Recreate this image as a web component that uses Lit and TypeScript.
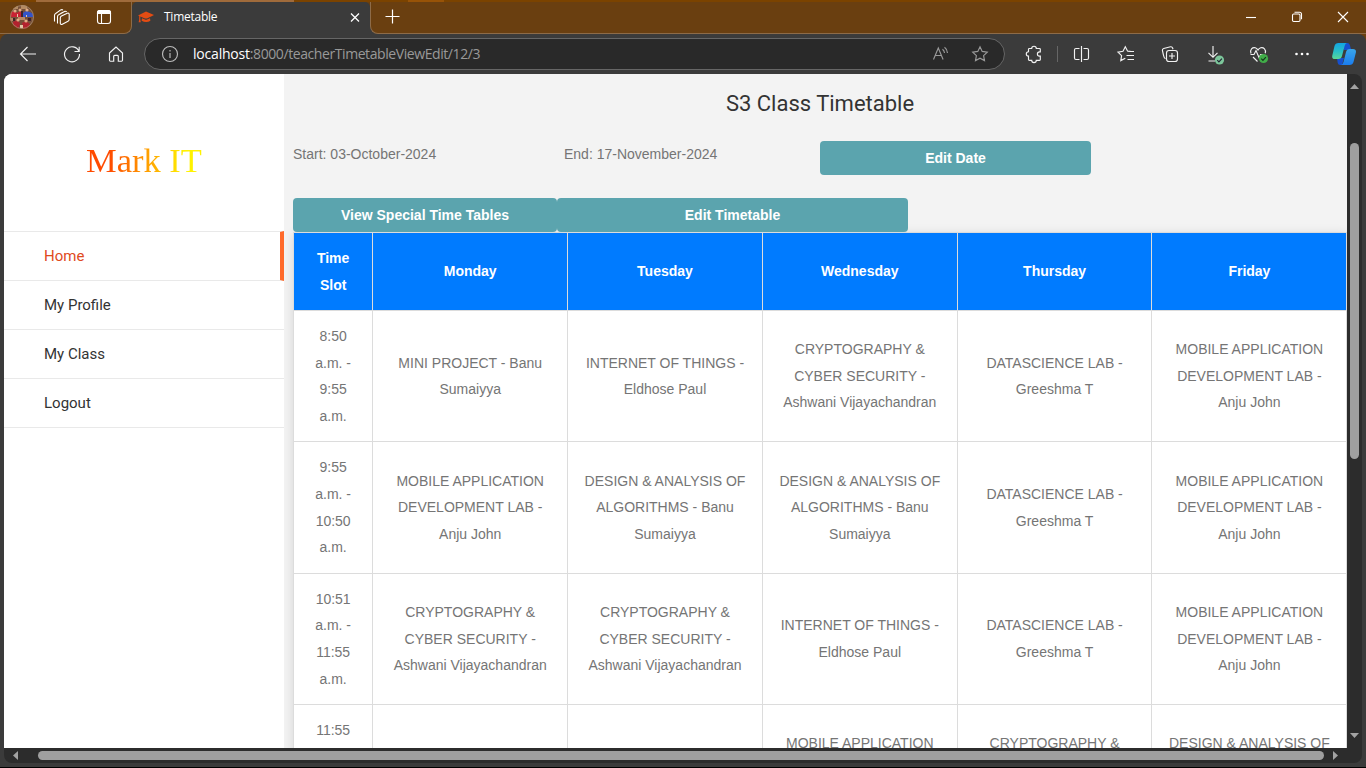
import { LitElement, html, svg, css } from "lit";
import { customElement } from "lit/decorators.js";

const icon = (content: unknown, cls = "") =>
  html`<svg class="ico ${cls}" viewBox="0 0 24 24" width="24" height="24">${content}</svg>`;

const workspaces = svg`<path d="M10.500 8.500 15 6.300M4.500 16.500V10.500c0-1 .3-1.600 1.200-2L10.700 4.900q1.500-.8 2.200.3M7.500 18.500V11.700c0-1 .3-1.600 1.200-2L14.500 6.400q1.500-.6 2.100.6"/><path d="M10.300 13c0-1 .4-1.600 1.200-2l5.800-2.800c1-.4 1.900.1 1.900 1.200v4.900c0 1-.3 1.600-1.200 2l-5.700 3c-1 .5-2 0-2-1.100z"/>`;
const tabActions = svg`<rect x="5.500" y="5.500" width="13" height="13" rx="2.500"/><path d="M5.500 8.500V7.500q0-2 2-2h9q2 0 2 2v1z" fill="#fff"/><path d="M9.500 9v9.500"/>`;
const back = svg`<path d="M20 12H4.500M11.500 5 4.500 12l7 7"/>`;
const reload = svg`<path d="M18.900 9.300A7.500 7.500 0 1 0 19.500 12M19.200 4.800v4.700h-4.700"/>`;
const home = svg`<path d="M5.500 11 12 5l6.500 6v7.300q0 .9-.9.900h-3.300v-4.900q0-1-1-1h-2.600q-1 0-1 1v4.900H6.400q-.9 0-.9-.9z"/>`;
const info = svg`<circle cx="12" cy="12" r="7.500"/><path d="M12 11v5M12 8v1.500"/>`;
const readAloud = svg`<path d="M4.500 17.500 9.300 6l4.800 11.500M6.200 13.500h6.200M13.500 7.200q1.800 1.300 2 3.800M15.500 5.300q2.800 2 3 5.700"/>`;
const star = svg`<path d="m12 4.800 2.200 4.600 5.100.7-3.700 3.500.9 5-4.500-2.400-4.500 2.400.9-5-3.700-3.500 5.100-.7z"/>`;
const puzzle = svg`<path d="M6.500 7.300q0-.8.800-.8H9.700a2.300 2.300 0 0 1 4.600 0h3.200q.8 0 .8.800v2.600h-.8a2.100 2.100 0 0 0 0 4.200h.8v3.400q0 .8-.8.800h-3.200a2.300 2.300 0 0 1-4.600 0H7.300q-.8 0-.8-.8v-3.400a2.200 2.200 0 0 1 0-4.400z"/>`;
const split = svg`<path d="M10.500 6.500H7q-1.500 0-1.500 1.500v8q0 1.500 1.500 1.500h3.500M14.500 6.500H18q1.500 0 1.500 1.500v8q0 1.500-1.500 1.500h-3.500M12.500 4v16"/>`;
const favorites = svg`<path d="M16.500 9.300 13.500 9 11.300 4.800 9 9.300l-5 .8 3.600 3.500-.8 5 4.500-2.400M13.500 9.500H20M12.500 13.500H20M13.500 17.500H20"/>`;
const collections = svg`<path d="M7.500 16.800C6.300 16.300 6 15.500 5.700 14L4.400 8.500q-.2-1.600 1.300-2l6.800-1.700q1.600-.3 2.100 1.200l.4 1.200"/><rect x="8.500" y="8.500" width="11" height="11" rx="2.500"/><path d="M14 11v6M11 14h6"/>`;
const download = svg`<path d="M11 4v11M6.500 10.800 11 15.300l4.500-4.500M6.500 19H13"/><circle cx="17.500" cy="18" r="4.600" fill="#7cc69a" stroke="none"/><path d="m15.300 18.200 1.600 1.600 3-3.200" stroke="#223"/>`;
const health = svg`<path d="M5 11.500C3.500 7.500 6.500 5 9.300 5.700q1.700.5 2.700 2.300 1-1.800 2.700-2.300c2.800-.7 5.800 1.800 4.500 5.500M4.500 12.500H8l2-4 3 7 1.700-3H17M7 15l4.500 4.500"/><circle cx="17.500" cy="16.500" r="4.600" fill="#41ad49" stroke="none"/><path d="m15.300 16.700 1.600 1.600 3-3.200" stroke="#14351a"/>`;
const more = svg`<g fill="#fff" stroke="none"><circle cx="6.500" cy="12" r="1.300"/><circle cx="12" cy="12" r="1.300"/><circle cx="17.500" cy="12" r="1.300"/></g>`;

@customElement("browser-tabs")
class BrowserTabs extends LitElement {
  static styles = css`
    :host { display: flex; flex-direction: column; height: 34px; background: #6a3f10; color: #fff; }
    .edge { height: 2px; display: grid; grid-template-columns: 36px 258px 114px 36px 1fr; background: #7b4300; }
    .edge .lit { background: #a06b3b; }
    .edge .glow { background: #985307; }
    .row { height: 32px; display: grid; grid-template-columns: 132px 238px 1fr; }
    .under { background: #3b3b3b; display: flex; }
    .seg { flex: 1; background: #6a3f10; box-sizing: border-box; border-bottom: 1px solid #8d6b48; display: flex; align-items: center; padding-bottom: 1px; }
    .seg.left { border-right: 1px solid #8d6b48; border-bottom-right-radius: 8px; }
    .seg.right { border-left: 1px solid #8d6b48; border-bottom-left-radius: 8px; }
    .tab { background: #3b3b3b; border-radius: 5px 5px 0 0; display: flex; align-items: center; padding: 0 3px 2px 6px; }
    .name { flex: 1; margin-left: 10px; font: 12px/16px "Open Sans", sans-serif; letter-spacing: -0.25px; }
    .ico { fill: none; stroke: #fff; stroke-width: 1.1; display: block; }
    .avatar { margin-left: 10px; }
    .ws { margin-left: 16px; }
    .ta { margin-left: 18px; }
    .plus { margin-left: 9px; }
    .space { flex: 1; }
    .win { width: 46px; display: flex; justify-content: center; }
  `;
  render() {
    return html`
      <div class="edge"><i></i><i class="lit"></i><i></i><i class="glow"></i></div>
      <div class="row">
        <div class="under"><div class="seg left">
          <svg class="avatar" width="24" height="24" viewBox="0 0 24 24">
            <defs><clipPath id="round"><circle cx="12" cy="12" r="12"/></clipPath></defs>
            <g clip-path="url(#round)">
              <path fill="#765039" d="M0 0h24v24H0z"/>
              <path fill="#b58b62" d="M3 1h5v3H3zM11 0h6v4h-6z"/>
              <path fill="#c92233" d="M0 8l4-2 3 2 3-2 2 3-1 3H1z"/>
              <path fill="#3454c8" d="M13 8l3-2 4 1 3 2v3H13z"/>
              <path fill="#b3222e" d="M3 17l4-2 3 3-1 5H3zM12 18l4-2 4 3-2 5h-5z"/>
              <path fill="#b98763" d="M8 12h7v3H8zM0 13h4v3H0z"/>
              <g fill="#e1ae88"><circle cx="5" cy="6" r="1.600"/><circle cx="10" cy="5" r="1.500"/><circle cx="17" cy="5" r="1.600"/><circle cx="8" cy="15" r="1.600"/><circle cx="16" cy="16" r="1.600"/></g>
              <path fill="#e3c8a6" d="M7 9h1v3H7zM16 10h1v2h-1zM10 20h3v3h-3z"/>
              <path fill="#402329" d="M11 6h2v6h-2zM3 13h2v3H3zM18 13h3v3h-3z"/>
            </g>
            <circle cx="12" cy="12" r="11.500" fill="none" stroke="#a98a68" stroke-width=".8"/>
          </svg>
          ${icon(workspaces, "ws")}${icon(tabActions, "ta")}
        </div></div>
        <div class="tab">
          <svg width="16" height="14" viewBox="0 0 16 14" fill="#e34c13"><path d="M8 1.500 16 5 9 8.400q-1 .4-2 0L2.300 6.600v3l.5 2.600H.6l.6-2.600V6.100L0 5.500z"/><path d="M4 8.300 7 9.600q1 .4 2 0l3-1.400.4 2.500q-4 2.800-8.800 0z"/></svg>
          <span class="name">Timetable</span>
          ${icon(svg`<path d="m8 8.500 8 8m0-8-8 8" stroke-width="1.300"/>`)}
        </div>
        <div class="under"><div class="seg right">
          ${icon(svg`<path d="M5.500 11.500h14M12.500 4.500v14" stroke-width="1.200"/>`, "plus")}
          <div class="space"></div>
          <div class="win">${icon(svg`<path d="M7 12.500h10"/>`)}</div>
          <div class="win">${icon(svg`<rect x="7.500" y="9" width="7.500" height="7.500" rx="1.200"/><path d="M9.500 7.200h5q2 0 2 2v5"/>`)}</div>
          <div class="win">${icon(svg`<path d="m7 7 10 10M17 7 7 17"/>`)}</div>
        </div></div>
      </div>`;
  }
}

@customElement("browser-toolbar")
class BrowserToolbar extends LitElement {
  static styles = css`
    :host { display: block; height: 40px; background: #6a3f10; }
    .bar {
      height: 40px; background: #3b3b3b; border-top-left-radius: 8px; border-top-right-radius: 8px; display: grid; align-items: center; justify-items: center;
      grid-template-columns: 56px 32px 56px 861px 7px 44px 3px 44px 45px 44px 44px 44px 44px 40px;
    }
    .ico { fill: none; stroke: #f2f2f2; stroke-width: 1.150; display: block; }
    .url { width: 861px; height: 32px; box-sizing: border-box; border: 1px solid #666; border-radius: 16px; background: #292929; display: flex; align-items: center; padding: 0 12px 0 13px; }
    .address { flex: 1; margin-left: 11px; font: 14px/18px "Open Sans", sans-serif; letter-spacing: -0.42px; color: #999; white-space: nowrap; }
    .host { color: #fff; letter-spacing: -0.2px; }
    .dim { stroke: #999; }
    .soft { stroke: #bbb; }
    .star { margin-left: 15px; }
    .sep { width: 1px; height: 16px; background: #666; }
  `;
  render() {
    return html`<div class="bar">
      ${icon(back)}${icon(reload)}${icon(home)}
      <div class="url">
        ${icon(info, "soft")}
        <span class="address"><span class="host">localhost</span>:8000/teacherTimetableViewEdit/12/3</span>
        ${icon(readAloud, "dim")}${icon(star, "dim star")}
      </div><i></i>
      ${icon(puzzle)}<i class="sep"></i>${icon(split)}${icon(favorites)}${icon(collections)}${icon(download)}${icon(health)}${icon(more)}
      <svg width="24" height="24" viewBox="0 0 24 24">
        <defs>
          <linearGradient id="a" x1="0" y1="0" x2="0" y2="1"><stop stop-color="#12a5e3"/><stop offset=".55" stop-color="#2bc0c5"/><stop offset="1" stop-color="#5bd896"/></linearGradient>
          <linearGradient id="b" x1="0" y1="0" x2="0" y2="1"><stop stop-color="#3aa5e8"/><stop offset="1" stop-color="#1a7df0"/></linearGradient>
        </defs>
        <path fill="#1650cf" d="M12 1h3.500q1.700 0 2.300 2l1.500 5H12zM5 16h7l-2 7H8q-1.700 0-2.300-2z"/>
        <path fill="url(#a)" d="M6.500 1h8.300q-1.600.5-2.200 3L10 14q-.8 3-3.500 3H2.800Q-.4 17 .3 13.500L2.500 4q.8-3 4-3z"/>
        <path fill="url(#b)" d="M17.500 7H21q3.500 0 2.900 3.500L21.500 20q-.8 3-4 3H9q1.800-.5 2.500-3L14 10q.8-3 3.500-3z"/>
      </svg>
    </div>`;
  }
}

@customElement("side-menu")
class SideMenu extends LitElement {
  static styles = css`
    :host { display: block; width: 280px; background: #fff; }
    .logo { height: 157px; box-sizing: border-box; padding: 66px 0 0 82px; }
    .brand { display: block; width: fit-content; font: 34.500px/40px "Liberation Serif", serif; white-space: nowrap; background: linear-gradient(90deg, #ff4a00 20%, #fff200 85%); -webkit-background-clip: text; background-clip: text; color: transparent; }
    .item { height: 49px; box-sizing: border-box; border-bottom: 1px solid #e9e9e9; padding-left: 40px; font: 15px/49px Roboto, sans-serif; color: #333; }
    .item.first { height: 50px; border-top: 1px solid #e9e9e9; }
    .item.active { color: #e04a1c; border-right: 4px solid #ff6a2b; }
  `;
  render() {
    return html`<div class="logo"><span class="brand">Mark IT</span></div>
      ${["Home", "My Profile", "My Class", "Logout"].map((t, i) => html`<div class="item ${i ? "" : "first active"}">${t}</div>`)}`;
  }
}

const MOBILE = ["MOBILE APPLICATION", "DEVELOPMENT LAB -", "Anju John"];
const CRYPTO = ["CRYPTOGRAPHY &", "CYBER SECURITY -", "Ashwani Vijayachandran"];
const DESIGN = ["DESIGN & ANALYSIS OF", "ALGORITHMS - Banu", "Sumaiyya"];
const IOT = ["INTERNET OF THINGS -", "Eldhose Paul"];
const DATA = ["DATASCIENCE LAB -", "Greeshma T"];
const ROWS: string[][][] = [
  [["8:50", "a.m. -", "9:55", "a.m."], ["MINI PROJECT - Banu", "Sumaiyya"], IOT, CRYPTO, DATA, MOBILE],
  [["9:55", "a.m. -", "10:50", "a.m."], MOBILE, DESIGN, DESIGN, DATA, MOBILE],
  [["10:51", "a.m. -", "11:55", "a.m."], CRYPTO, CRYPTO, IOT, DATA, MOBILE],
];
const LAST = [["11:55"], [], [], [MOBILE[0]], [CRYPTO[0]], [DESIGN[0]]];
const HEAD = [["Time", "Slot"], ["Monday"], ["Tuesday"], ["Wednesday"], ["Thursday"], ["Friday"]];

@customElement("class-timetable")
class ClassTimetable extends LitElement {
  static styles = css`
    :host { display: block; background: #f3f3f3; padding-left: 9px; overflow: hidden; font: 14px/26.6px "Liberation Sans", Arial, sans-serif; color: #757575; }
    .title { margin: 0; height: 67px; box-sizing: border-box; padding-top: 15px; text-align: center; font: 400 22px/30px Roboto, sans-serif; color: #333; }
    .dates { display: grid; grid-template-columns: 271px 256px 271px; height: 57px; align-items: start; white-space: nowrap; }
    .btn { height: 34px; border-radius: 4px; background: #5ba4ae; color: #fff; font-weight: 700; line-height: 34px; text-align: center; }
    .actions { display: grid; grid-template-columns: 264px 351px; }
    .table { width: 1054.400px; border-left: 1px solid #dcdcdc; border-top: 1px solid #dcdcdc; box-sizing: border-box; background: #fff; box-shadow: 0 2px 10px rgba(0, 0, 0, 0.12); }
    .row { display: grid; grid-template-columns: 79.300px repeat(5, 194.800px); height: 131.400px; }
    .row.head { height: 78px; background: #007bff; color: #fff; font-weight: 700; }
    .cell { box-sizing: border-box; border-right: 1px solid #dcdcdc; border-bottom: 1px solid #dcdcdc; display: flex; flex-direction: column; align-items: center; justify-content: center; white-space: nowrap; }
    .row.last .cell { justify-content: flex-start; padding-top: 25.300px; }
    .row.last .cell:first-child { padding-top: 12px; }
  `;
  private row(cells: string[][], cls = "") {
    return html`<div class="row ${cls}">${cells.map((c) => html`<div class="cell">${c.map((l) => html`<span>${l}</span>`)}</div>`)}</div>`;
  }
  render() {
    return html`
      <h2 class="title">S3 Class Timetable</h2>
      <div class="dates"><span>Start: 03-October-2024</span><span>End: 17-November-2024</span><div class="btn">Edit Date</div></div>
      <div class="actions"><div class="btn">View Special Time Tables</div><div class="btn">Edit Timetable</div></div>
      <div class="table">${this.row(HEAD, "head")}${ROWS.map((r) => this.row(r))}${this.row(LAST, "last")}</div>`;
  }
}

@customElement("app-root")
class AppRoot extends LitElement {
  static styles = css`
    :host { display: block; width: 1366px; height: 768px; overflow: hidden; background: #3b3b3b; }
    .frame { margin: 0 4px; height: 689px; display: grid; grid-template-columns: 1343px 15px; grid-template-rows: 674px 15px; border-radius: 8px; overflow: hidden; background: #2c2c2c; }
    .page { display: grid; grid-template-columns: 280px 1063px; overflow: hidden; background: #f3f3f3; }
    .vbar { display: flex; flex-direction: column; align-items: center; padding: 10px 0 10px; box-sizing: border-box; }
    .vthumb { width: 9px; height: 316px; margin-top: 54px; border-radius: 5px; background: #9f9f9f; }
    .hbar { display: flex; align-items: center; padding: 0 9px; box-sizing: border-box; }
    .hthumb { width: 1286px; height: 9px; margin: 0 9px 0 20px; border-radius: 5px; background: #9f9f9f; }
    .space { flex: 1; }
    .arrow { fill: #a3a3a3; display: block; }
    .foot { height: 4px; border-bottom: 1px solid #000; }
  `;
  render() {
    return html`
      <browser-tabs></browser-tabs>
      <browser-toolbar></browser-toolbar>
      <div class="frame">
        <div class="page"><side-menu></side-menu><class-timetable></class-timetable></div>
        <div class="vbar">
          <svg class="arrow" width="9" height="5"><path d="M4.500 0 9 5H0z"/></svg>
          <div class="vthumb"></div><div class="space"></div>
          <svg class="arrow" width="9" height="5"><path d="M0 0h9L4.500 5z"/></svg>
        </div>
        <div class="hbar">
          <svg class="arrow" width="5" height="9"><path d="M0 4.500 5 0v9z"/></svg>
          <div class="hthumb"></div>
          <svg class="arrow" width="5" height="9"><path d="M5 4.500 0 9V0z"/></svg>
        </div>
      </div>
      <div class="foot"></div>`;
  }
}
